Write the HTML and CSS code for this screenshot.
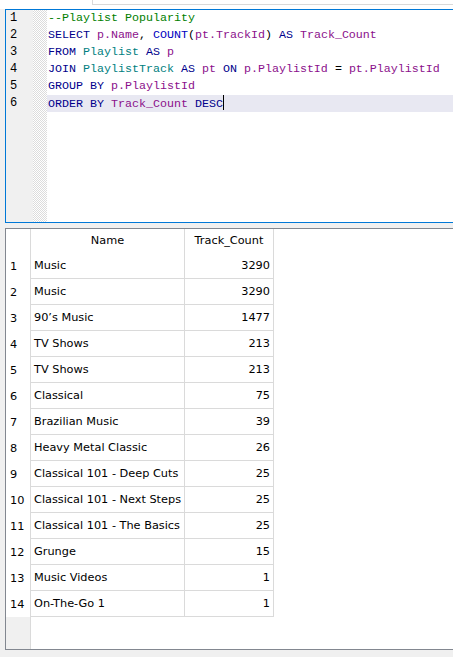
FILE: index.html
```html
<!DOCTYPE html>
<html>
<head>
<meta charset="utf-8">
<link rel="stylesheet" href="styles.css">
</head>
<body>
<div class="topbar"><div class="tabline"></div></div>
<div class="editor">
  <div class="gutter">
    <div class="ln">1</div><div class="ln">2</div><div class="ln">3</div><div class="ln">4</div><div class="ln">5</div><div class="ln">6</div>
  </div>
  <div class="fold"></div>
  <div class="code">
    <div class="line"><span class="cm">--Playlist Popularity</span></div>
    <div class="line"><span class="kw">SELECT</span> <span class="id">p.Name</span><span class="pn">, </span><span class="fn">COUNT</span><span class="pn">(</span><span class="id">pt.TrackId</span><span class="pn">)</span> <span class="kw">AS</span> <span class="id">Track_Count</span></div>
    <div class="line"><span class="kw">FROM</span> <span class="tb">Playlist</span> <span class="kw">AS</span> <span class="id">p</span></div>
    <div class="line"><span class="kw">JOIN</span> <span class="tb">PlaylistTrack</span> <span class="kw">AS</span> <span class="id">pt</span> <span class="kw">ON</span> <span class="id">p.PlaylistId</span> <span class="pn">=</span> <span class="id">pt.PlaylistId</span></div>
    <div class="line"><span class="kw">GROUP BY</span> <span class="id">p.PlaylistId</span></div>
    <div class="line current"><span class="kw">ORDER BY</span> <span class="id">Track_Count</span> <span class="kw">DESC</span><span class="caret"></span></div>
  </div>
</div>
<div class="grid">
  <div class="cols">
    <div class="rowhead">
      <div class="rh hdr"></div>
      <div class="rh">1</div><div class="rh">2</div><div class="rh">3</div><div class="rh">4</div><div class="rh">5</div><div class="rh">6</div><div class="rh">7</div><div class="rh">8</div><div class="rh">9</div><div class="rh">10</div><div class="rh">11</div><div class="rh">12</div><div class="rh">13</div><div class="rh">14</div>
    </div>
    <div class="col name">
      <div class="hc">Name</div>
      <div class="c">Music</div><div class="c">Music</div><div class="c">90’s Music</div><div class="c">TV Shows</div><div class="c">TV Shows</div><div class="c">Classical</div><div class="c">Brazilian Music</div><div class="c">Heavy Metal Classic</div><div class="c">Classical 101 - Deep Cuts</div><div class="c">Classical 101 - Next Steps</div><div class="c">Classical 101 - The Basics</div><div class="c">Grunge</div><div class="c">Music Videos</div><div class="c">On-The-Go 1</div>
    </div>
    <div class="col count">
      <div class="hc">Track_Count</div>
      <div class="c">3290</div><div class="c">3290</div><div class="c">1477</div><div class="c">213</div><div class="c">213</div><div class="c">75</div><div class="c">39</div><div class="c">26</div><div class="c">25</div><div class="c">25</div><div class="c">25</div><div class="c">15</div><div class="c">1</div><div class="c">1</div>
    </div>
  </div>
</div>
</body>
</html>
```

FILE: styles.css
```css
html, body {
  margin: 0;
  padding: 0;
}
body {
  width: 453px;
  height: 657px;
  overflow: hidden;
  background: #f0f0f0;
  display: flex;
  flex-direction: column;
}
.topbar {
  height: 9px;
  background: #ffffff;
  padding-left: 92px;
}
.tabline {
  height: 4px;
  border-left: 1px solid #d9d9d9;
  border-bottom: 1px solid #d9d9d9;
}
.editor {
  margin-left: 5px;
  height: 212px;
  border: 1px solid #0078d7;
  border-right: none;
  background: #ffffff;
  display: flex;
  overflow: hidden;
}
.gutter {
  width: 27px;
  background: #f0f0f0;
  font-family: "Liberation Mono", monospace;
  font-size: 12px;
  color: #000;
}
.ln {
  height: 17px;
  line-height: 17px;
  padding-left: 4px;
}
.fold {
  width: 14px;
  background-color: #ffffff;
  background-image: repeating-conic-gradient(#dcdcdc 0 25%, #ffffff 0 50%);
  background-size: 2px 2px;
}
.code {
  flex: 1;
  font-family: "Liberation Mono", monospace;
  font-size: 11.67px;
  color: #000;
}
.line {
  height: 17px;
  line-height: 17px;
  padding-left: 1px;
  white-space: pre;
}
.line.current {
  background: #e8e8f2;
}
.caret {
  display: inline-block;
  width: 1px;
  height: 15px;
  background: #000;
  vertical-align: -3px;
}
.cm { color: #008000; }
.kw { color: #00008b; }
.fn { color: #0000c0; }
.id { color: #8b108b; }
.tb { color: #008080; }
.pn { color: #000000; }

.grid {
  margin-top: 5px;
  margin-left: 5px;
  height: 420px;
  border: 1px solid #828790;
  border-right: none;
  background: #ffffff;
  font-family: "DejaVu Sans", sans-serif;
  font-size: 11.3px;
  color: #000;
}
.cols {
  display: flex;
  height: 100%;
}
.rowhead {
  width: 24px;
  background: #f0f0f0;
  border-right: 1px solid #dadada;
}
.rh {
  height: 26px;
  line-height: 28px;
  padding-left: 4px;
  background: #ffffff;
}
.rh.hdr {
  height: 24px;
}
.col {
  border-right: 1px solid #dadada;
  align-self: flex-start;
}
.col.name { width: 153px; }
.col.count { width: 88px; }
.hc {
  height: 24px;
  line-height: 24px;
  text-align: center;
}
.c {
  height: 25px;
  line-height: 26px;
  border-bottom: 1px solid #dadada;
  padding: 0 3px;
  white-space: nowrap;
}
.count .c {
  text-align: right;
}
```
